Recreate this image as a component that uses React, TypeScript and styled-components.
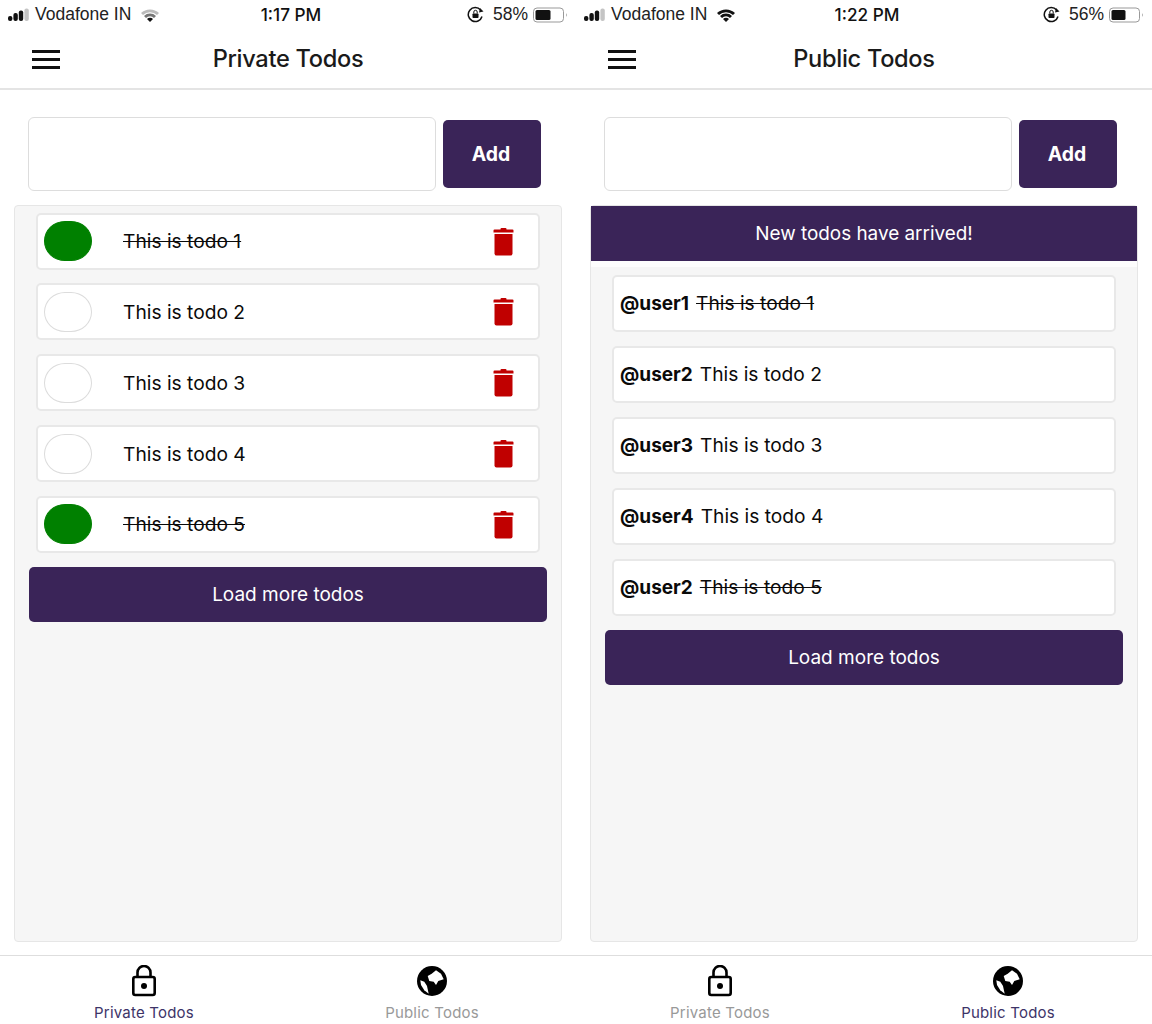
import styled, { createGlobalStyle } from "styled-components";

const PURPLE = "#3a2458";

const GlobalStyle = createGlobalStyle`
  html, body {
    margin: 0;
    padding: 0;
    background: #fff;
  }
  * {
    box-sizing: border-box;
  }
`;

const Page = styled.div`
  width: 1152px;
  height: 1024px;
  display: flex;
  overflow: hidden;
  font-family: Inter, "Liberation Sans", sans-serif;
  color: #0a0a0a;
`;

const Phone = styled.div`
  width: 576px;
  height: 1024px;
  display: flex;
  flex-direction: column;
`;

const StatusBar = styled.div`
  height: 30px;
  padding: 0 7px 1px 8px;
  display: grid;
  grid-template-columns: 1fr auto 1fr;
  align-items: center;
  font-family: "Liberation Sans", sans-serif;
  font-size: 17.5px;
  color: #222;
`;

const StatusLeft = styled.div`
  display: flex;
  align-items: center;
`;

const Carrier = styled.span`
  margin: 0 9px 0 5px;
`;

const Clock = styled.span`
  margin-left: 5px;
  font-family: Inter, sans-serif;
  font-size: 17.2px;
  font-weight: 500;
  color: #111;
`;

const StatusRight = styled.div`
  display: flex;
  align-items: center;
  justify-content: flex-end;
`;

const Percent = styled.span`
  margin: 0 5px 0 9px;
`;

const Header = styled.header`
  height: 60px;
  border-bottom: 2px solid #e4e4e4;
  display: grid;
  grid-template-columns: 1fr auto 1fr;
  align-items: center;
`;

const Burger = styled.div`
  width: 28px;
  margin-left: 32px;
  display: flex;
  flex-direction: column;
  gap: 5px;
`;

const BurgerBar = styled.span`
  height: 3px;
  background: #111;
`;

const Title = styled.h1`
  margin: 0 0 2px;
  font-size: 23.6px;
  font-weight: 550;
  letter-spacing: -0.3px;
  color: #1a1a1a;
`;

const InputRow = styled.div`
  padding: 27px 35px 14px 28px;
  display: flex;
  align-items: center;
  gap: 7px;
`;

const TodoInput = styled.input`
  flex: 1;
  min-width: 0;
  height: 74px;
  background: #fff;
  border: 1px solid #ddd;
  border-radius: 6px;
  outline: none;
`;

const AddButton = styled.button`
  width: 98px;
  height: 68px;
  padding: 0 2px 1px 0;
  border: none;
  border-radius: 5px;
  background: ${PURPLE};
  color: #fff;
  font-family: inherit;
  font-size: 19.4px;
  font-weight: 700;
`;

const Panel = styled.main`
  flex: 1;
  margin: 0 14px 13px;
  background: #f6f6f6;
  border: 1px solid #e6e6e6;
  border-radius: 4px;
  display: flex;
  flex-direction: column;
`;

const Banner = styled.div`
  height: 55px;
  flex-shrink: 0;
  display: flex;
  align-items: center;
  justify-content: center;
  background: ${PURPLE};
  color: #fff;
  font-size: 18.9px;
  box-shadow: 0 6px 0 #fdfdfd;
`;

const TodoList = styled.ul<{ $spaced?: boolean }>`
  list-style: none;
  margin: ${(p) => (p.$spaced ? "14px" : "6.6px")} 0 0;
  padding: 0 21px;
  display: flex;
  flex-direction: column;
  gap: ${(p) => (p.$spaced ? "14px" : "13.85px")};
`;

const TodoItem = styled.li`
  height: 57px;
  padding: 0 24px 0 6px;
  display: flex;
  align-items: center;
  background: #fff;
  border: 2px solid #e8e8e8;
  border-radius: 5px;
  font-size: 19.2px;
`;

const Check = styled.span<{ $done: boolean }>`
  width: 48px;
  height: 40px;
  margin-right: 31px;
  flex-shrink: 0;
  border-radius: 21px / 20px;
  background: ${(p) => (p.$done ? "#008000" : "#fff")};
  border: 1px solid ${(p) => (p.$done ? "#008000" : "#dcdcdc")};
`;

const TodoText = styled.span<{ $done: boolean }>`
  flex: 1;
  text-decoration: ${(p) => (p.$done ? "line-through" : "none")};
`;

const PublicLine = styled.span`
  margin-top: -1px;
`;

const UserName = styled.strong`
  margin-right: 7px;
  font-size: 19px;
  font-weight: 700;
`;

const PublicText = styled.span<{ $done: boolean }>`
  text-decoration: ${(p) => (p.$done ? "line-through" : "none")};
`;

const LoadMore = styled.button`
  height: 55px;
  margin: 14px 14px 0;
  flex-shrink: 0;
  border: none;
  border-radius: 5px;
  background: ${PURPLE};
  color: #fff;
  font-family: inherit;
  font-size: 19px;
`;

const TabBar = styled.nav`
  height: 69px;
  border-top: 1px solid #dedede;
  display: grid;
  grid-template-columns: 1fr 1fr;
`;

const Tab = styled.div<{ $active: boolean }>`
  padding-top: 9px;
  display: flex;
  flex-direction: column;
  align-items: center;
  gap: 6px;
  font-size: 15px;
  letter-spacing: 0.2px;
  color: ${(p) => (p.$active ? "#3d3468" : "#999")};
`;

const TabIcon = styled.div`
  height: 32px;
  display: flex;
  align-items: center;
  justify-content: center;
  color: #000;
`;

const Signal = () => (
  <svg width="22" height="14" viewBox="0 0 22 14">
    <rect x="0" y="8" width="4.4" height="5" rx="2" fill="#111" />
    <rect x="5.4" y="5" width="4.4" height="8" rx="2" fill="#111" />
    <rect x="10.8" y="2.5" width="4.4" height="10.5" rx="2" fill="#111" />
    <rect x="16.4" y="0.5" width="4.4" height="12.5" rx="2" fill="#c4c4c4" />
  </svg>
);

const Wifi = ({ weak }: { weak: boolean }) => (
  <svg width="20" height="14" viewBox="0 0 20 14">
    <path d="M1 5 A13 13 0 0 1 19 5 L17 7 A10 10 0 0 0 3 7 Z" fill={weak ? "#bbb" : "#111"} />
    <path d="M4 8 A8.5 8.5 0 0 1 16 8 L14 10 A5.5 5.5 0 0 0 6 10 Z" fill={weak ? "#777" : "#111"} />
    <path d="M7 11 A4.2 4.2 0 0 1 13 11 L10 14 Z" fill="#111" />
  </svg>
);

const RotationLock = () => (
  <svg width="17" height="17" viewBox="0 0 17 17">
    <path d="M13.6 4 A7 7 0 1 0 15 10.5" fill="none" stroke="#111" strokeWidth="1.5" />
    <path d="M16.5 5.5 L12 6.5 L13 2 Z" fill="#111" />
    <rect x="5.5" y="7.5" width="6" height="4.5" rx="0.8" fill="#111" />
    <path d="M6.8 7.5 V6 A1.7 1.7 0 0 1 10.2 6 V7.5" fill="none" stroke="#111" strokeWidth="1" />
  </svg>
);

const Battery = ({ level }: { level: number }) => (
  <svg width="36" height="16" viewBox="0 0 36 16">
    <rect x="0.5" y="1" width="30" height="14" rx="3.5" fill="none" stroke="#999" />
    <rect x="2.5" y="3" width={level} height="10" rx="1.5" fill="#111" />
    <path d="M33 6 A3 3 0 0 1 33 10 Z" fill="#999" />
  </svg>
);

const LockIcon = () => (
  <svg width="26" height="32" viewBox="0 0 26 32">
    <path d="M6.5 12 V7.5 A6.5 6.5 0 0 1 19.5 7.5 V12" fill="none" stroke="#000" strokeWidth="2.6" />
    <rect x="2.3" y="12" width="21.4" height="18" rx="2" fill="none" stroke="#000" strokeWidth="2.6" />
    <circle cx="13" cy="21" r="3" fill="#000" />
  </svg>
);

const GlobeIcon = () => (
  <svg width="30" height="30" viewBox="0 0 30 30">
    <circle cx="15" cy="15" r="15" fill="#000" />
    <path d="M10.7 10 L14.7 7.7 L19 4.3 L24 7.7 L26.7 13.3 L21.3 15 L19 19 L16.7 15.7 L12.3 15 Z" fill="#fff" />
    <path d="M3.3 14.3 L7.3 15.7 L10 20 L11.7 27.7 L7.3 24.3 L4 19 Z" fill="#fff" />
  </svg>
);

const TrashIcon = () => (
  <svg width="21" height="29" viewBox="0 0 21 29">
    <path d="M7.5 2 A1 1 0 0 1 8.5 1 H12.5 A1 1 0 0 1 13.5 2 V2.5 H19.5 A1 1 0 0 1 20.5 3.5 V5.5 H0.5 V3.5 A1 1 0 0 1 1.5 2.5 H7.5 Z" fill="#c00000" />
    <path d="M1.5 7 H19.5 V26.5 A2 2 0 0 1 17.5 28.5 H3.5 A2 2 0 0 1 1.5 26.5 Z" fill="#c00000" />
  </svg>
);

type Todo = { text: string; done: boolean; user: string };

const todos: Todo[] = [
  { text: "This is todo 1", done: true, user: "@user1" },
  { text: "This is todo 2", done: false, user: "@user2" },
  { text: "This is todo 3", done: false, user: "@user3" },
  { text: "This is todo 4", done: false, user: "@user4" },
  { text: "This is todo 5", done: true, user: "@user2" },
];

type ScreenProps = {
  isPublic: boolean;
  time: string;
  battery: string;
  level: number;
};

function Screen({ isPublic, time, battery, level }: ScreenProps) {
  return (
    <Phone>
      <StatusBar>
        <StatusLeft>
          <Signal />
          <Carrier>Vodafone IN</Carrier>
          <Wifi weak={!isPublic} />
        </StatusLeft>
        <Clock>{time}</Clock>
        <StatusRight>
          <RotationLock />
          <Percent>{battery}</Percent>
          <Battery level={level} />
        </StatusRight>
      </StatusBar>
      <Header>
        <Burger>
          <BurgerBar />
          <BurgerBar />
          <BurgerBar />
        </Burger>
        <Title>{isPublic ? "Public Todos" : "Private Todos"}</Title>
      </Header>
      <InputRow>
        <TodoInput />
        <AddButton>Add</AddButton>
      </InputRow>
      <Panel>
        {isPublic && <Banner>New todos have arrived!</Banner>}
        <TodoList $spaced={isPublic}>
          {todos.map((todo) =>
            isPublic ? (
              <TodoItem key={todo.text}>
                <PublicLine>
                  <UserName>{todo.user}</UserName>
                  <PublicText $done={todo.done}>{todo.text}</PublicText>
                </PublicLine>
              </TodoItem>
            ) : (
              <TodoItem key={todo.text}>
                <Check $done={todo.done} />
                <TodoText $done={todo.done}>{todo.text}</TodoText>
                <TrashIcon />
              </TodoItem>
            )
          )}
        </TodoList>
        <LoadMore>Load more todos</LoadMore>
      </Panel>
      <TabBar>
        <Tab $active={!isPublic}>
          <TabIcon>
            <LockIcon />
          </TabIcon>
          Private Todos
        </Tab>
        <Tab $active={isPublic}>
          <TabIcon>
            <GlobeIcon />
          </TabIcon>
          Public Todos
        </Tab>
      </TabBar>
    </Phone>
  );
}

export default function App() {
  return (
    <Page>
      <GlobalStyle />
      <Screen isPublic={false} time="1:17 PM" battery="58%" level={15} />
      <Screen isPublic time="1:22 PM" battery="56%" level={14} />
    </Page>
  );
}
